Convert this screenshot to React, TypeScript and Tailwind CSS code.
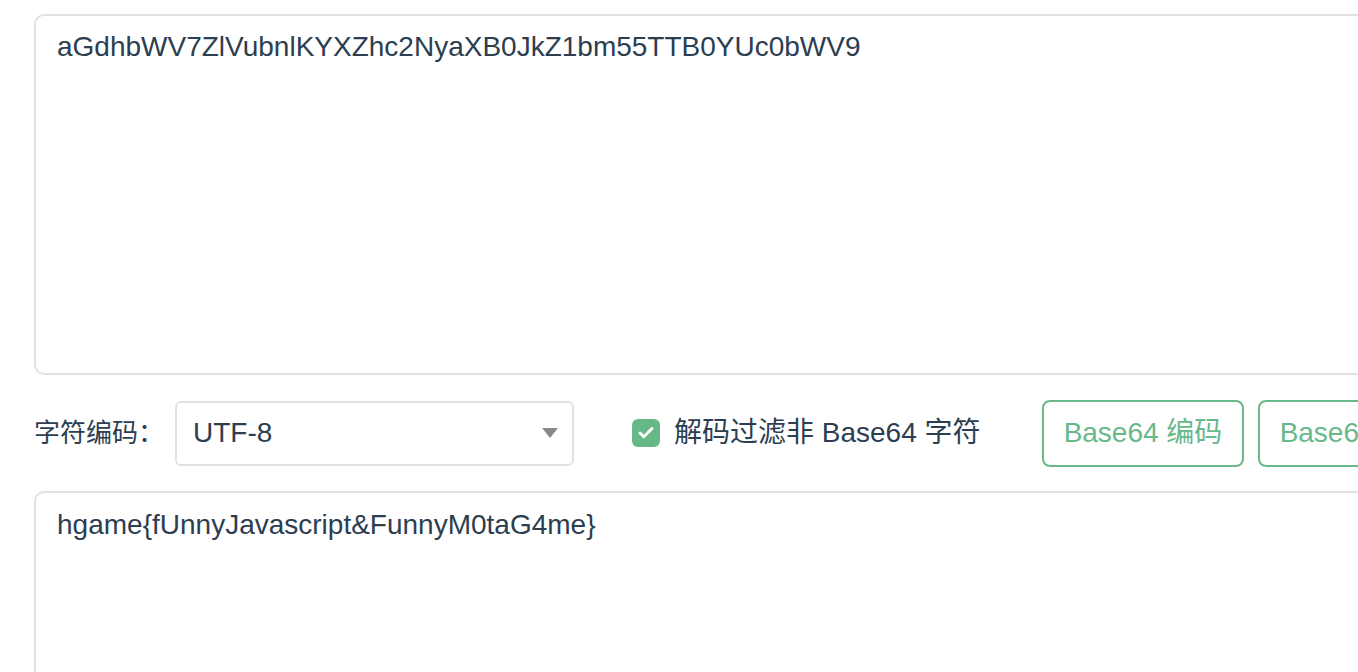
import { Check } from "lucide-react";

export default function App() {
  const font = { fontFamily: '"Liberation Sans", "Noto Sans CJK SC", sans-serif' };
  return (
    <div
      className="w-[1358px] h-[672px] overflow-hidden bg-white text-[#2c3e50]"
      style={font}
    >
      <div className="w-[1600px] pl-[34px] pt-[14px] flex flex-col">
        {/* input */}
        <div className="h-[361px] border-2 border-[#dfe3e8] rounded-[10px] px-[21px] pt-[13px] text-[28px] leading-[36px]">
          aGdhbWV7ZlVubnlKYXZhc2NyaXB0JkZ1bm55TTB0YUc0bWV9
        </div>

        {/* controls */}
        <div className="flex items-center h-[116px]">
          <span className="w-[141px] text-[26px] whitespace-nowrap">字符编码：</span>
          <div className="w-[399px] h-[65px] border-2 border-[#dfe3e8] rounded-[6px] flex items-center justify-between pl-[16px] pr-[14px]">
            <span className="text-[28px]">UTF-8</span>
            <svg width="16" height="10" viewBox="0 0 16 10">
              <path d="M0 0 H16 L8 10 Z" fill="#888" />
            </svg>
          </div>
          <label className="ml-[58px] w-[410px] flex items-center gap-[14px]">
            <span className="w-[28px] h-[28px] rounded-[6px] bg-[#67b887] flex items-center justify-center">
              <Check className="w-[18px] h-[18px] text-white" strokeWidth={4} />
            </span>
            <span className="text-[28px] whitespace-nowrap">解码过滤非 Base64 字符</span>
          </label>
          <button className="w-[202px] h-[67px] border-2 border-[#68b88a] rounded-[8px] text-[#68b88a] text-[28px] whitespace-nowrap">
            Base64 编码
          </button>
          <button className="ml-[14px] w-[202px] h-[67px] border-2 border-[#68b88a] rounded-[8px] text-[#68b88a] text-[28px] whitespace-nowrap">
            Base64 解码
          </button>
        </div>

        {/* output */}
        <div className="h-[361px] border-2 border-[#dfe3e8] rounded-[10px] px-[21px] pt-[14px] text-[28px] leading-[36px]">
          hgame{"{"}fUnnyJavascript&amp;FunnyM0taG4me{"}"}
        </div>
      </div>
    </div>
  );
}
